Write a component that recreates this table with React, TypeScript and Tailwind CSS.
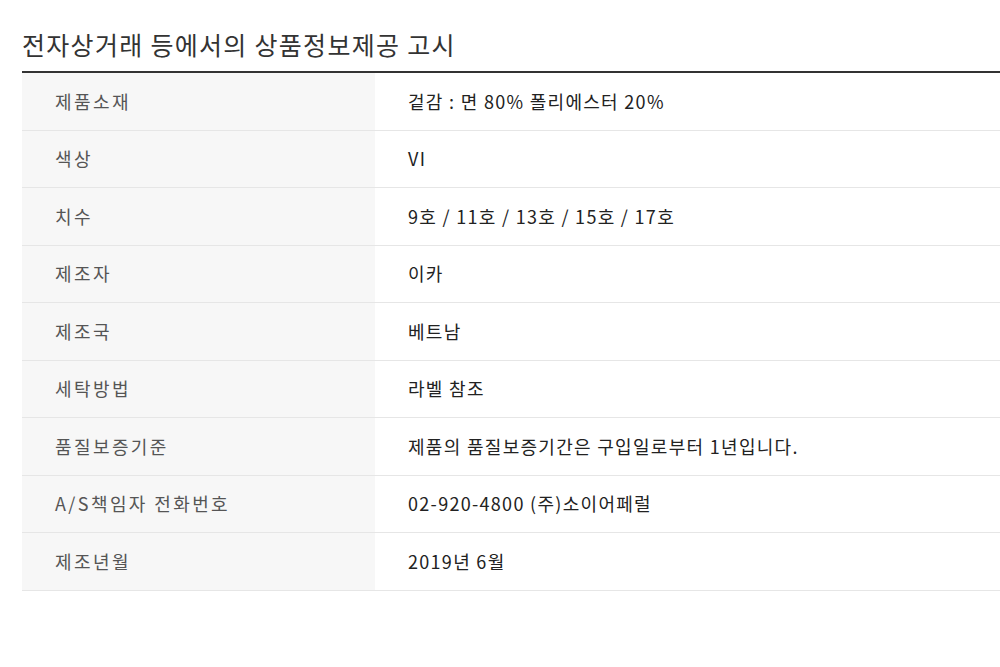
const rows: [string, string][] = [
  ["제품소재", "겉감 : 면 80% 폴리에스터 20%"],
  ["색상", "VI"],
  ["치수", "9호 / 11호 / 13호 / 15호 / 17호"],
  ["제조자", "이카"],
  ["제조국", "베트남"],
  ["세탁방법", "라벨 참조"],
  ["품질보증기준", "제품의 품질보증기간은 구입일로부터 1년입니다."],
  ["A/S책임자 전화번호", "02-920-4800 (주)소이어페럴"],
  ["제조년월", "2019년 6월"],
];

export default function App() {
  return (
    <div
      className="w-[1000px] h-[667px] bg-white pl-[22px]"
      style={{ fontFamily: '"Noto Sans CJK KR", "Noto Sans", sans-serif' }}
    >
      <h2 className="pt-[29px] pb-[12px] text-[25px] leading-[30px] font-normal text-[#333] tracking-[1.3px]">
        전자상거래 등에서의 상품정보제공 고시
      </h2>
      <div className="border-t-2 border-[#333]">
        {rows.map(([label, value]) => (
          <div key={label} className="flex h-[57.5px] border-b border-[#e6e6e6]">
            <div className="w-[353px] bg-[#f7f7f7] pl-[33px] flex items-center text-[18px] text-[#555] tracking-[2.4px]">
              {label}
            </div>
            <div className="flex-1 pl-[33px] flex items-center text-[18px] text-[#222] tracking-[1.3px]">
              {value}
            </div>
          </div>
        ))}
      </div>
    </div>
  );
}
